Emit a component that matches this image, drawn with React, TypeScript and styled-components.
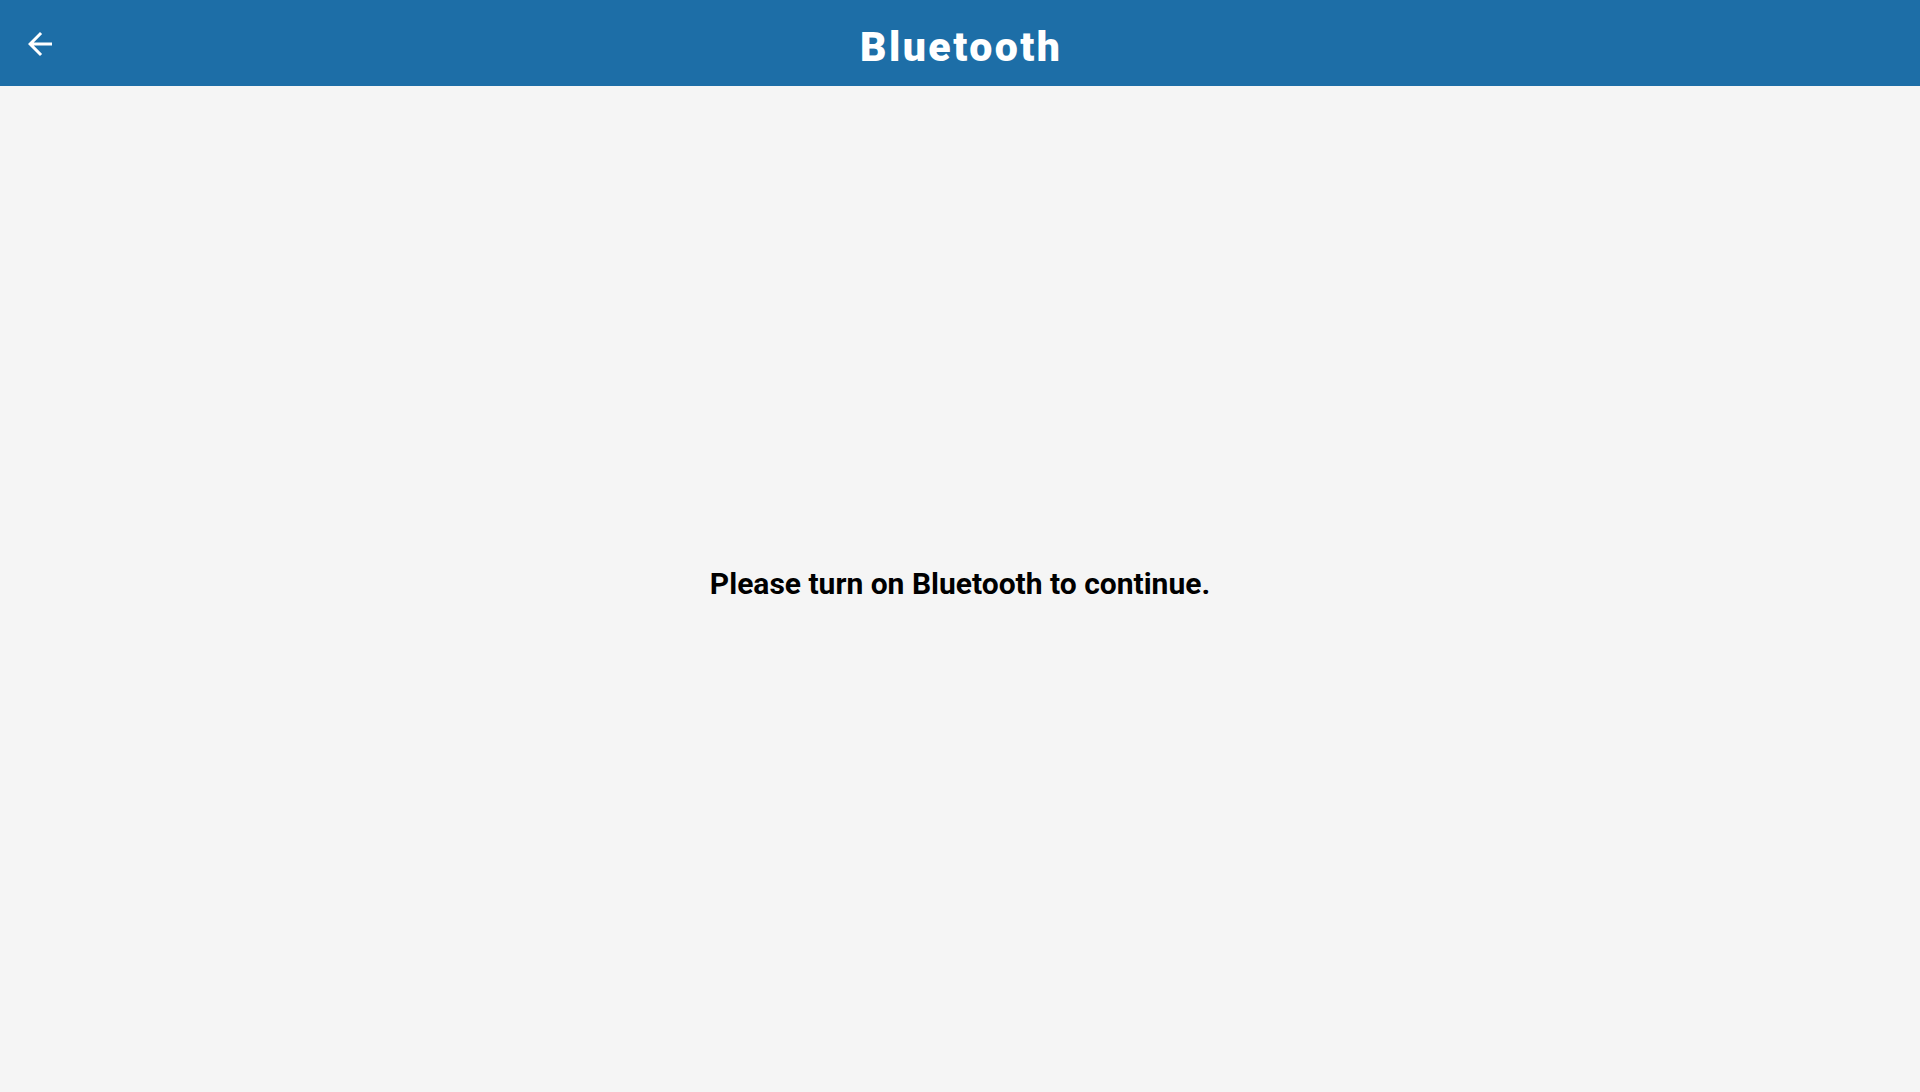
import React from "react";
import styled, { createGlobalStyle } from "styled-components";

const Global = createGlobalStyle`
  html, body { margin: 0; padding: 0; height: 100%; }
  body { background: #f5f5f5; font-family: Roboto, "Noto Sans", Arial, sans-serif; }
  #root { height: 100%; }
`;

const Page = styled.div`
  display: flex;
  flex-direction: column;
  height: 1092px;
  background: #f5f5f5;
`;

const Header = styled.header`
  position: relative;
  height: 86px;
  flex-shrink: 0;
  background: #1d6ea7;
  display: flex;
  align-items: center;
  justify-content: center;
`;

const BackButton = styled.button`
  position: absolute;
  left: 22px;
  top: 26px;
  width: 36px;
  height: 36px;
  padding: 0;
  border: none;
  background: transparent;
  display: flex;
  align-items: center;
  justify-content: center;
  cursor: pointer;
`;

const Title = styled.h1`
  margin: 0;
  color: #ffffff;
  font-family: Roboto, sans-serif;
  font-weight: 900;
  font-size: 41px;
  letter-spacing: 2.5px;
  line-height: 1;
  padding-top: 8px;
  padding-left: 2.5px;
`;

const Content = styled.main`
  flex: 1;
  display: flex;
  align-items: center;
  justify-content: center;
  padding-bottom: 12px;
`;

const Message = styled.p`
  margin: 0;
  color: #000000;
  font-family: Roboto, sans-serif;
  font-weight: 700;
  font-size: 30px;
`;

export default function App() {
  return (
    <>
      <Global />
      <Page>
        <Header>
          <BackButton aria-label="Back">
            <svg width="36" height="36" viewBox="0 0 24 24" fill="#ffffff">
              <path d="M20 11H7.83l5.59-5.59L12 4l-8 8 8 8 1.41-1.41L7.83 13H20v-2z" />
            </svg>
          </BackButton>
          <Title>Bluetooth</Title>
        </Header>
        <Content>
          <Message>Please turn on Bluetooth to continue.</Message>
        </Content>
      </Page>
    </>
  );
}
